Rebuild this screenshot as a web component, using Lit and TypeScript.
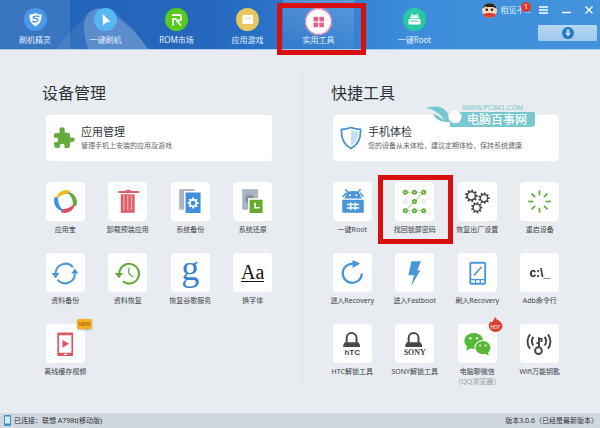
import { LitElement, html, css, svg, nothing, type TemplateResult } from "lit";
import { customElement, property } from "lit/decorators.js";
import { classMap } from "lit/directives/class-map.js";

const gearPath = (cx: number, cy: number, r: number, teeth: number) => {
  const pts: string[] = [];
  const step = (Math.PI * 2) / teeth;
  for (let i = 0; i < teeth; i++) {
    const a = i * step;
    for (const [f, k] of [[-0.32, 0.8], [-0.2, 1.08], [0.2, 1.08], [0.32, 0.8]]) {
      pts.push(`${(cx + Math.cos(a + f * step) * r * k).toFixed(2)} ${(cy + Math.sin(a + f * step) * r * k).toFixed(2)}`);
    }
  }
  return `M${pts.join("L")}Z`;
};

const petal = "M10 17.500C9.500 11 16 7 22 8C24.500 9 23.500 11.500 21 11.700C16.500 12 12.500 14 10 17.500Z";

const art: Record<string, unknown> = {
  petals: svg`
    <path d=${petal} fill="#e9bd2d"/>
    <path d=${petal} fill="#63ab3f" transform="rotate(90 19 19)"/>
    <path d=${petal} fill="#dd4f5b" transform="rotate(180 19 19)"/>
    <path d=${petal} fill="#3f8fdc" transform="rotate(270 19 19)"/>`,
  trash: svg`
    <path d="M10 8.800h7V7.600h5v1.200h8.500v2H10z" fill="#d9606a"/>
    <path d="M12.500 12h13.500v18h-13.500z" fill="#d9606a"/>
    <path d="M15.500 13v14.500M19.200 13v14.500M22.900 13v14.500" stroke="#f3a9a9" stroke-width="1.300"/>`,
  backup: svg`
    <path d="M8 7h15v20H8z" fill="#a9b3c1"/>
    <path d="M13.500 9.500h16v21.500h-16z" fill="#3f8fdc" stroke="#fff" stroke-width="1.400"/>
    <path d=${gearPath(21.5, 20.5, 5, 8)} fill="#fff"/><circle cx="21.500" cy="20.500" r="2.300" fill="#3f8fdc"/>`,
  restore: svg`
    <path d="M9 7h15.500v20H9z" fill="#a9b3c1"/>
    <path d=${gearPath(16.5, 17, 4.6, 8)} fill="#7f8b9b"/><circle cx="16.500" cy="17" r="2" fill="#a9b3c1"/>
    <path d="M15.500 16.500h14v14.500h-14z" fill="#63ab2f" stroke="#fff" stroke-width="1.400"/>
    <path d="M21.500 20v5h4.500" fill="none" stroke="#fff" stroke-width="1.500"/>`,
  sync: svg`
    <g fill="none" stroke="#4a94d8" stroke-width="2"><path d="M9.300 20a9.600 9.600 0 0 1 17-6"/><path d="M28.200 20a9.600 9.600 0 0 1-17 6"/></g>
    <path d="M5.500 19.500h7.500l-3.700 5zM24.500 20h7l-3.300-5z" fill="#4a94d8"/>`,
  history: svg`
    <path d="M11 20a9.600 9.600 0 1 1 3.500 7.600" fill="none" stroke="#63ab3f" stroke-width="2"/>
    <path d="M6.500 19.500h8l-3.700 5z" fill="#63ab3f"/>
    <path d="M20.300 14.500V20l4 3.500" fill="none" stroke="#63ab3f" stroke-width="1.300"/>`,
  video: svg`
    <rect x="11" y="8.300" width="15.500" height="23" rx="1" fill="#d65a66"/>
    <path d="M12.700 11h12.100v17H12.700z" fill="#fff"/>
    <path d="M16 15.500l6.500 3.800-6.500 3.800z" fill="#d65a66"/><path d="M17.300 29h3.200v1.200h-3.200z" fill="#fff"/>`,
  android: svg`
    <path d="M12 7l3 3.500M27 7l-3.500 3.500M9.500 14.500l3.500-4M29.500 14.500l-3-4" stroke="#4a94d8" stroke-width="1.500"/>
    <path d="M11 16l3-6.300q5.500-1.700 11 0l3 6.300z" fill="#4a94d8"/>
    <path d="M9 17.200h21v11.600q0 1.200-1.200 1.200H10.200q-1.200 0-1.200-1.200z" fill="#4a94d8"/>
    <circle cx="16.500" cy="13" r="1" fill="#fff"/><circle cx="22.700" cy="13" r="1" fill="#fff"/>
    <path d="M13.500 22h12M13.500 25.400h12M17.200 20v7.500M21.800 20v7.500" stroke="#fff" stroke-width="1.400"/>`,
  pattern: svg`
    <path d="M10 10h18L10 28h18" fill="none" stroke="#c3ddb1" stroke-width="1.200"/>
    ${[[10, 10], [19, 10], [28, 10], [19, 19], [10, 28], [19, 28], [28, 28]].map(([x, y]) => svg`<circle cx=${x} cy=${y} r="1.600" fill="#fff" stroke="#5fae35" stroke-width="1.700"/>`)}
    <circle cx="10" cy="19" r="1.600" fill="#fff" stroke="#d5dadf"/><circle cx="28" cy="19" r="1.600" fill="#fff" stroke="#d5dadf"/>`,
  gears: svg`
    ${[[13, 13.5, 5.8], [25.3, 15.7, 5.2], [18.2, 25, 5.2]].map(([x, y, r]) => svg`
      <path d=${gearPath(x, y, r, 9)} fill="#45484c"/><circle cx=${x} cy=${y} r=${r * 0.55} fill="#fff"/>`)}`,
  spinner: svg`
    <g stroke="#63ab3f" stroke-width="1.700">
      ${[0, 45, 90, 135, 180, 225, 270, 315].map((a) => svg`<path d="M19 8v5" transform=${`rotate(${a} 19 19)`}/>`)}
    </g>`,
  reload: svg`
    <path d="M19.500 10.500a9.300 9.300 0 1 0 8.600 9.500" fill="none" stroke="#4a94d8" stroke-width="2.200"/>
    <path d="M19 6.500l7.500 4-7.500 4z" fill="#4a94d8"/>`,
  bolt: svg`<path d="M16 8h9.300l-3.600 8.700h3L15.700 32.500l2.800-10.700H13z" fill="#4a94d8"/>`,
  flash: svg`
    <rect x="12" y="9.500" width="14.500" height="20.500" rx="1" fill="#fff" stroke="#4a94d8" stroke-width="1.800"/>
    <path d="M12 26h14.500M17 26v4M21.700 26v4" stroke="#4a94d8" stroke-width="1.200"/>
    <path d="M15.500 22l7.500-8.500" stroke="#4a94d8" stroke-width="1.500"/>`,
  lock: svg`
    <path d="M13.300 19v-5.500a4.800 4.800 0 0 1 9.600 0V19" fill="none" stroke="#45484c" stroke-width="1.900"/>
    <path d="M11.500 17.800h13.300l1.500 2.700v2H10v-2z" fill="#45484c"/>`,
  wechat: svg`
    <ellipse cx="15.300" cy="16.500" rx="9.200" ry="7.800" fill="#58b838"/><path d="M9 21l-1 5 5-2.500z" fill="#58b838"/>
    <ellipse cx="24.300" cy="23" rx="7.900" ry="6.900" fill="#58b838" stroke="#fff" stroke-width="1"/><path d="M26 28.500l4 2.500-.800-4z" fill="#58b838"/>
    <g fill="#fff"><circle cx="12" cy="14" r="1.200"/><circle cx="18.500" cy="14" r="1.200"/><circle cx="21.700" cy="21" r="1"/><circle cx="27" cy="21" r="1"/></g>`,
  wifikey: svg`
    <g fill="none" stroke="#45484c" stroke-width="1.900">
      <circle cx="18" cy="26" r="3.300"/><path d="M18.500 23V13M18.500 18.500h-2.500M18.500 14.500h2.500v3"/>
      <path d="M13 12.500a7.500 7.500 0 0 0 0 8.500M24 12.500a7.500 7.500 0 0 1 0 8.500M9.800 10a11 11 0 0 0 0 14M27.200 10a11 11 0 0 1 0 14"/>
    </g>`,
};

interface Tool { label: string; icon?: string; text?: string; style?: string; note?: string; badge?: "new" | "hot"; marked?: boolean }

const deviceTools: Tool[] = [
  { label: "应用宝", icon: "petals" },
  { label: "卸载预装应用", icon: "trash" },
  { label: "系统备份", icon: "backup" },
  { label: "系统还原", icon: "restore" },
  { label: "资料备份", icon: "sync" },
  { label: "资料恢复", icon: "history" },
  { label: "恢复谷歌服务", text: "g", style: "google" },
  { label: "换字体", text: "Aa", style: "font" },
  { label: "离线缓存视频", icon: "video", badge: "new" },
];

const quickTools: Tool[] = [
  { label: "一键Root", icon: "android" },
  { label: "找回锁屏密码", icon: "pattern", marked: true },
  { label: "恢复出厂设置", icon: "gears" },
  { label: "重启设备", icon: "spinner" },
  { label: "进入Recovery", icon: "reload" },
  { label: "进入Fastboot", icon: "bolt" },
  { label: "刷入Recovery", icon: "flash" },
  { label: "Adb命令行", text: "c:\\_", style: "shell" },
  { label: "HTC解锁工具", icon: "lock", text: "hTC", style: "brand htc" },
  { label: "SONY解锁工具", icon: "lock", text: "SONY", style: "brand sony" },
  { label: "电脑聊微信", icon: "wechat", note: "（QQ浏览器）", badge: "hot" },
  { label: "Wifi万能钥匙", icon: "wifikey" },
];

const buttonReset = css`
  button { font: inherit; color: inherit; background: none; border: 0; margin: 0; padding: 0; cursor: pointer; }
  svg { display: block; }
`;

@customElement("tool-tile")
export class ToolTile extends LitElement {
  @property({ attribute: false }) tool!: Tool;

  static styles = [buttonReset, css`
    :host { display: block; }
    .item { position: relative; display: flex; flex-direction: column; align-items: center; width: 100%; min-height: 71px; font-size: 7px; white-space: nowrap; color: #3d4247; }
    .tile { position: relative; width: 39px; height: 39px; margin-bottom: 3px; border-radius: 4px; background: #fff; display: grid; place-items: center; }
    .tile > * { grid-area: 1 / 1; }
    .label { line-height: 12px; }
    .note { line-height: 8px; color: #93989d; }
    .google { font: 36px/36px "Liberation Serif", serif; color: #3a82cf; align-self: start; margin-top: -3px; }
    .font { font: 20px/18px "Liberation Serif", serif; color: #111; border-bottom: 1px solid #111; }
    .shell { font: bold 12px/16px "Liberation Sans", sans-serif; color: #222; }
    .brand { align-self: end; font-weight: bold; line-height: 8px; padding-bottom: 6px; color: #45484c; }
    .htc { font-family: "Liberation Sans", sans-serif; font-size: 8px; }
    .sony { font-family: "Liberation Serif", serif; font-size: 8px; }
    .new { position: absolute; left: 31px; top: -5px; width: 15px; height: 10px; border-radius: 2px; background: #f2b01e; color: #8a4b12; font: 5px/10px "Noto Sans", sans-serif; text-align: center; box-shadow: 0 1px 2px #0004; }
    .hot { position: absolute; left: 30px; top: -7px; width: 15px; height: 15px; }
    .hot svg { position: absolute; inset: 0; }
    .hot span { position: relative; display: block; padding-top: 6px; font: 5px/8px "Noto Sans", sans-serif; color: #fff; text-align: center; }
    .marker { position: absolute; inset: -7px -7px 9px -6px; border: 5px solid #d7100f; }
  `];

  render() {
    const t = this.tool;
    return html`<button class="item">
      <span class="tile">
        ${t.icon ? html`<svg width="39" height="39" viewBox="0 0 38 38" aria-hidden="true">${art[t.icon]}</svg>` : nothing}
        ${t.text ? html`<span class=${t.style ?? ""}>${t.text}</span>` : nothing}
        ${t.badge === "new" ? html`<span class="new">NEW</span>` : nothing}
        ${t.badge === "hot" ? html`<span class="hot"><svg viewBox="0 0 15 15" width="15" height="15"><path d="M6.500 0c2 1 2.500 2.500 2.500 3.500l1.200-1c.3 1.500 4.300 3 4.300 6.500a6.900 6 0 0 1-13.800 0c0-2 1-3.500 2-4.500l1 1.200C4.500 4 6.700 3 6.500 0z" fill="#dc3f33"/></svg><span>HOT</span></span>` : nothing}
      </span>
      <span class="label">${t.label}</span>
      ${t.note ? html`<span class="note">${t.note}</span>` : nothing}
      ${t.marked ? html`<span class="marker"></span>` : nothing}
    </button>`;
  }
}

interface Tab { label: string; color: string; icon: TemplateResult<2>; active?: boolean; lead?: boolean; apart?: boolean }

const tabs: Tab[] = [
  { label: "刷机精灵", color: "#4d97ea", lead: true, icon: svg`<path d="M11.500 5q3 1.600 6 1.500.8 8-6 12-6.800-4-6-12 3 .1 6-1.500z" fill="#fff"/><path d="M15.500 8.500q-7-1-6.500 1.500 5 .5 5 2.200-.5 2.500-6 1.300" fill="none" stroke="#4d97ea" stroke-width="1.300"/>` },
  { label: "一键刷机", color: "#55b8f2", icon: svg`<path d="M8.500 5.500l8 8.500-4 .3-3.500 3z" fill="#fff"/>` },
  { label: "ROM市场", color: "#57cc1c", icon: svg`<path d="M7 7h7.500q1.500 0 1.500 1.500V11q0 1.500-1.500 1.500h-3M8 17.500V11h3.500M11.500 12.500l4.500 5" fill="none" stroke="#fff" stroke-width="1.800"/>` },
  { label: "应用游戏", color: "#e8c85e", icon: svg`<rect x="6.500" y="7" width="10.500" height="9" rx="1" fill="#fff"/><path d="M8.500 9q3 4 6.500 0" fill="none" stroke="#e8c85e"/>` },
  { label: "实用工具", color: "#fff", active: true, icon: svg`<circle cx="11.500" cy="11.500" r="11" fill="#fff" stroke="#e77aa8" stroke-width="1"/><g fill="#e0628f"><rect x="7.300" y="7.500" width="4" height="4" rx=".6"/><rect x="12.200" y="7.500" width="4" height="4" rx=".6"/><rect x="7.300" y="12.300" width="4" height="4" rx=".6"/><rect x="12.200" y="12.300" width="4" height="4" rx=".6"/></g>` },
  { label: "一键Root", color: "#27c9a6", apart: true, icon: svg`<path d="M7 10.500l1.500-3 1-.3-1-1.700M16 10.500l-1.500-3-1-.3 1-1.700M8 10q3.500-5.500 7 0z" fill="#fff" stroke="#fff" stroke-width=".7"/><rect x="5.500" y="11" width="12" height="5.500" rx="1" fill="#fff"/><path d="M7.500 13h8" stroke="#27c9a6"/>` },
];

@customElement("app-root")
export class AppRoot extends LitElement {
  static styles = [buttonReset, css`
    :host { display: flex; flex-direction: column; min-height: 100vh; background: #e8ecf1; font-family: "Noto Sans", "Noto Sans CJK SC", sans-serif; color: #2f3337; }
    header { position: relative; display: flex; justify-content: space-between; height: 49px; border-bottom: 1px solid #a9cdec; background: linear-gradient(90deg, #2163b8 0%, #2467bd 34%, #2b76cb 48%, #3c8cd9 68%, #4292dc 100%); color: #e4f0fc; }
    .hill { position: absolute; left: 56px; bottom: 0; }
    nav { position: relative; display: flex; }
    .tab { position: relative; width: 71px; display: flex; flex-direction: column; align-items: center; font-size: 8px; line-height: 12px; padding-top: 8px; }
    .tab svg { margin-bottom: 3px; }
    .lead { width: 70px; background: #ffffff1c; }
    .apart { margin-left: 25px; }
    .active { background: linear-gradient(#ffffff30, #ffffff08); }
    .active svg { width: 27px; height: 27px; margin: 0 0 -1px; }
    .marker { position: absolute; inset: 3px -12px -6px -6px; border: 5px solid #d7100f; z-index: 1; }
    .side { display: flex; flex-direction: column; align-items: flex-end; gap: 5px; padding-right: 3px; }
    .window { display: flex; align-items: center; height: 20px; gap: 14px; padding-right: 4px; }
    .user { position: relative; display: flex; align-items: center; gap: 4px; font-size: 8px; line-height: 12px; margin-right: -6px; }
    .count { position: absolute; right: 0; top: -1px; width: 10px; height: 10px; border-radius: 5px; background: #dc3a2c; color: #fff; font-size: 7px; line-height: 10px; text-align: center; }
    .download { width: 59px; height: 16px; border-radius: 1px; background: linear-gradient(#b5d6f2, #9fc9ec); display: grid; place-items: center; }
    main { flex: 1; display: grid; grid-template-columns: 1fr 1px 1fr; column-gap: 18px; padding: 0 29px 0 34px; }
    .rule { margin: 22px 0 30px; background: #dce1e7; }
    h2 { margin: 31px 8px 10px; font-size: 16px; line-height: 24px; font-weight: 400; }
    .quick h2 { margin-left: 10px; }
    .card { position: relative; margin: 0 12px 21px; height: 46px; border-radius: 4px; background: #fff; display: flex; }
    .cardbutton { flex: 1; display: flex; align-items: center; text-align: left; gap: 6px; padding: 0 7px; }
    .cardtext { display: flex; flex-direction: column; font-size: 7px; line-height: 12px; color: #62676c; white-space: nowrap; }
    .cardtitle { font-size: 11px; line-height: 16px; color: #33373b; }
    .tools { display: grid; grid-template-columns: repeat(4, 1fr); }
    .watermark { position: absolute; left: 93px; top: -12px; width: 110px; color: #72c5ce; pointer-events: none; }
    .site { padding-left: 36px; font: 7px/9px "Liberation Sans", sans-serif; }
    .brandname { margin-left: 24px; padding: 0 7px 0 17px; border-radius: 0 2px 4px 0; background: #78c8d0; color: #fff; font-size: 12px; line-height: 15px; font-weight: 500; white-space: nowrap; width: 61px; }
    .leaf { position: absolute; left: 0; top: 3px; }
    footer { display: flex; align-items: center; justify-content: space-between; height: 15px; padding: 0 2px 0 4px; background: #d0d7df; font-size: 7px; line-height: 15px; }
    .device { display: flex; align-items: center; gap: 3px; }
  `];

  private tab(t: Tab) {
    return html`<button class=${classMap({ tab: true, lead: !!t.lead, apart: !!t.apart, active: !!t.active })}>
      <svg width="23" height="23" viewBox="0 0 23 23" aria-hidden="true"><circle cx="11.500" cy="11.500" r="11.500" fill=${t.color}/>${t.icon}</svg>
      <span>${t.label}</span>
      ${t.active ? html`<span class="marker"></span>` : nothing}
    </button>`;
  }

  render() {
    return html`
      <header>
        <svg class="hill" width="94" height="42" viewBox="0 0 94 42" aria-hidden="true"><path d="M0 42Q20 16 38 3q12-5 24 5Q78 20 92 42z" fill="#fff" opacity=".08"/><path d="M32 42Q24 16 32 6q14-12 34 8 14 10 26 28z" fill="#fff" opacity=".2"/></svg>
        <nav>${tabs.map((t) => this.tab(t))}</nav>
        <div class="side">
          <div class="window">
            <button class="user">
              <svg width="15" height="15" viewBox="0 0 15 15" aria-hidden="true"><circle cx="7.500" cy="7.500" r="7.500" fill="#f6d9bf"/><path d="M.3 6a7.400 7.400 0 0 1 14.400 0Q12 3.500 9.500 4 5 4 3 3.500 1.500 4.500.3 6z" fill="#26201f"/><path d="M1 11q6.500-2 13 0a7.400 7.400 0 0 1-13 0z" fill="#dc3a2c"/><circle cx="4.800" cy="6.800" r="1.300" fill="#26201f"/><circle cx="10" cy="6.800" r="1.300" fill="#26201f"/></svg>
              <span>相见不...</span><span class="count">1</span>
            </button>
            <button aria-label="菜单"><svg width="9" height="8" viewBox="0 0 9 8"><path d="M0 1h9M0 4h9M0 7h9" stroke="#fff" stroke-width="1.300"/></svg></button>
            <button aria-label="最小化"><svg width="9" height="8" viewBox="0 0 9 8"><path d="M0 6.500h9" stroke="#fff" stroke-width="1.500"/></svg></button>
            <button aria-label="关闭"><svg width="8" height="8" viewBox="0 0 8 8"><path d="M.5.5l7 7M7.500.5l-7 7" stroke="#fff" stroke-width="1.400"/></svg></button>
          </div>
          <button class="download" aria-label="下载"><svg width="12" height="12" viewBox="0 0 12 12"><circle cx="6" cy="6" r="6" fill="#2479bd"/><path d="M4.600 2.500h2.800V6h2L6 9.600 2.600 6h2z" fill="#b5d6f2"/></svg></button>
        </div>
      </header>
      <main>
        <section>
          <h2>设备管理</h2>
          <div class="card"><button class="cardbutton">
            <svg width="22" height="22" viewBox="0 0 22 22" aria-hidden="true"><path d="M1 6.500l5.300-.8Q7.400 5.400 6.700 4.300 5.700.3 9 .2t2.700 3.900q-.5 1.300.7 1.400l4.300.8.4 3.800q.4 1.100 1.600.5 3-.5 3 2t-3 2.300q-1.300-.6-1.500.4l-.6 5.200-4.300.7q-1.200-.2-.7-1.500.4-3-2.300-3t-2.600 3q.5 1.400-.7 1.400L1.600 20.500 1 15.800q.2-1 1.500-.6 2.700.2 2.700-2.300t-2.700-2.400Q1 11 1 10z" fill="#63ab3f"/></svg>
            <span class="cardtext"><span class="cardtitle">应用管理</span><span>管理手机上安装的应用及游戏</span></span>
          </button></div>
          <div class="tools">${deviceTools.map((t) => html`<tool-tile .tool=${t}></tool-tile>`)}</div>
        </section>
        <div class="rule"></div>
        <section class="quick">
          <h2>快捷工具</h2>
          <div class="card">
            <button class="cardbutton">
              <svg width="22" height="24" viewBox="0 0 22 24" aria-hidden="true"><path d="M11 1.500q5 1.800 9.500 1.800.9 13.700-9.500 19.200Q.6 17 1.500 3.300 6 3.300 11 1.500z" fill="#fff" stroke="#4a90d0" stroke-width="1.800"/><path d="M11 4q4 1.300 7.400 1.400Q18.500 15.500 11 20z" fill="#bfe2f7"/></svg>
              <span class="cardtext"><span class="cardtitle">手机体检</span><span>您的设备从未体检，建议定期体检，保持系统健康</span></span>
            </button>
            <div class="watermark">
              <div class="site">WWW.PC841.COM</div>
              <div class="brandname">电脑百事网</div>
              <svg class="leaf" width="38" height="20" viewBox="0 0 38 20" aria-hidden="true"><path d="M0 2q14-4 20 3 4 4 3 11Q11 17 7 8q6 1 12 7Q12 4 0 2z" fill="#78c8d0"/><circle cx="29" cy="11" r="6.500" fill="#fff"/><path d="M22 13q6 7 13 3l3 4H30q-6 0-8-7z" fill="#78c8d0"/></svg>
            </div>
          </div>
          <div class="tools">${quickTools.map((t) => html`<tool-tile .tool=${t}></tool-tile>`)}</div>
        </section>
      </main>
      <footer>
        <span class="device"><svg width="7" height="11" viewBox="0 0 7 11" aria-hidden="true"><rect width="7" height="11" rx="1" fill="#3f8fc8"/><path d="M1 1.500h5v7H1z" fill="#d4ecf8"/></svg>已连接：联想 A798t(移动版)</span>
        <span>版本3.0.6（已经是最新版本）</span>
      </footer>`;
  }
}
